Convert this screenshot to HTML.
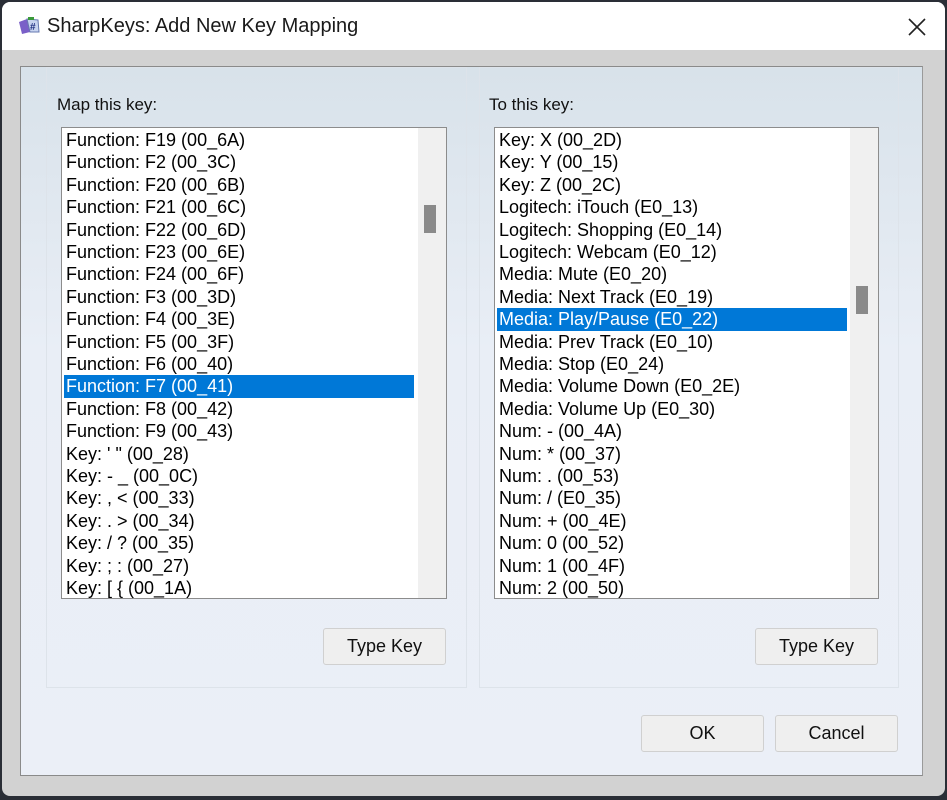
<!DOCTYPE html>
<html><head><style>
*{margin:0;padding:0;box-sizing:border-box}
body{width:947px;height:800px;background:#2a2e36;position:relative;overflow:hidden;font-family:"Liberation Sans",Arial,sans-serif;color:#000}
.win{position:absolute;left:2px;top:2px;width:943px;height:794px;background:#d2d2d2;border-radius:8px;overflow:hidden}
.title{position:absolute;left:0;top:0;width:100%;height:48px;background:#fff}
.title span{position:absolute;left:45px;top:13px;font-size:20px;color:#1a1a1a}
.inner{position:absolute;left:18px;top:64px;width:903px;height:710px;border:1px solid #8a8a8a;border-right-color:#9a9a9a;background:linear-gradient(#d8e2ea,#e9eef6 40%,#ebeff7)}
.grp{position:absolute;border:1px solid #dde3ea;top:0}
.lbl{position:absolute;font-size:17px;color:#111}
.list{position:absolute;background:#fff;border:1px solid #8c8c8c;overflow:hidden}
.row{position:absolute;left:4px;height:22.4px;line-height:22.4px;font-size:18px;white-space:nowrap}
.sel{background:#0078d7;color:#fff;width:350px;left:2px;padding-left:2px}
.sb{position:absolute;right:0;top:0;width:28px;height:100%;background:#f0f0f0}
.th{position:absolute;left:6px;width:12px;height:28px;background:#8a8a8a}
.btn{position:absolute;width:123px;height:37px;background:#efefef;border:1px solid #d0d0d0;border-radius:3px;font-size:18px;text-align:center;line-height:35px;color:#111}
</style></head><body>
<div class="win">
<div class="title">
<svg style="position:absolute;left:15px;top:14px" width="24" height="20" viewBox="0 0 24 20"><path d="M2 6 L10 3 L13 16 L5 18 Z" fill="#7a5fc8"/><path d="M10 3 L21 4 L22 16 L13 16 Z" fill="#c8d4f0" stroke="#6678b0" stroke-width="1"/><text x="13" y="14" font-size="10" font-family="Liberation Sans" fill="#203080" font-weight="bold">#</text><rect x="11" y="1" width="6" height="3" fill="#3a9a3a"/></svg>
<span>SharpKeys: Add New Key Mapping</span>
<svg style="position:absolute;left:906px;top:16px" width="18" height="18" viewBox="0 0 18 18"><path d="M1 1L17 17M17 1L1 17" stroke="#222" stroke-width="1.6"/></svg>
</div>
<div class="inner">
<div class="grp" style="left:25px;width:421px;height:621px"></div>
<div class="grp" style="left:458px;width:420px;height:621px"></div>
<div class="lbl" style="left:36px;top:28px">Map this key:</div>
<div class="lbl" style="left:468px;top:28px">To this key:</div>
<div class="list" style="left:40px;top:60px;width:386px;height:472px">
<div class="sb"><div class="th" style="top:77px"></div></div>
<div class="row" style="top:1px">Function: F19 (00_6A)</div>
<div class="row" style="top:23.4px">Function: F2 (00_3C)</div>
<div class="row" style="top:45.8px">Function: F20 (00_6B)</div>
<div class="row" style="top:68.2px">Function: F21 (00_6C)</div>
<div class="row" style="top:90.6px">Function: F22 (00_6D)</div>
<div class="row" style="top:113px">Function: F23 (00_6E)</div>
<div class="row" style="top:135.4px">Function: F24 (00_6F)</div>
<div class="row" style="top:157.8px">Function: F3 (00_3D)</div>
<div class="row" style="top:180.2px">Function: F4 (00_3E)</div>
<div class="row" style="top:202.6px">Function: F5 (00_3F)</div>
<div class="row" style="top:225px">Function: F6 (00_40)</div>
<div class="row sel" style="top:247.4px">Function: F7 (00_41)</div>
<div class="row" style="top:269.8px">Function: F8 (00_42)</div>
<div class="row" style="top:292.2px">Function: F9 (00_43)</div>
<div class="row" style="top:314.6px">Key: ' " (00_28)</div>
<div class="row" style="top:337px">Key: - _ (00_0C)</div>
<div class="row" style="top:359.4px">Key: , &lt; (00_33)</div>
<div class="row" style="top:381.8px">Key: . &gt; (00_34)</div>
<div class="row" style="top:404.2px">Key: / ? (00_35)</div>
<div class="row" style="top:426.6px">Key: ; : (00_27)</div>
<div class="row" style="top:449px">Key: [ { (00_1A)</div>
</div>
<div class="list" style="left:473px;top:60px;width:385px;height:472px">
<div class="sb"><div class="th" style="top:158px"></div></div>
<div class="row" style="top:1px">Key: X (00_2D)</div>
<div class="row" style="top:23.4px">Key: Y (00_15)</div>
<div class="row" style="top:45.8px">Key: Z (00_2C)</div>
<div class="row" style="top:68.2px">Logitech: iTouch (E0_13)</div>
<div class="row" style="top:90.6px">Logitech: Shopping (E0_14)</div>
<div class="row" style="top:113px">Logitech: Webcam (E0_12)</div>
<div class="row" style="top:135.4px">Media: Mute (E0_20)</div>
<div class="row" style="top:157.8px">Media: Next Track (E0_19)</div>
<div class="row sel" style="top:180.2px">Media: Play/Pause (E0_22)</div>
<div class="row" style="top:202.6px">Media: Prev Track (E0_10)</div>
<div class="row" style="top:225px">Media: Stop (E0_24)</div>
<div class="row" style="top:247.4px">Media: Volume Down (E0_2E)</div>
<div class="row" style="top:269.8px">Media: Volume Up (E0_30)</div>
<div class="row" style="top:292.2px">Num: - (00_4A)</div>
<div class="row" style="top:314.6px">Num: * (00_37)</div>
<div class="row" style="top:337px">Num: . (00_53)</div>
<div class="row" style="top:359.4px">Num: / (E0_35)</div>
<div class="row" style="top:381.8px">Num: + (00_4E)</div>
<div class="row" style="top:404.2px">Num: 0 (00_52)</div>
<div class="row" style="top:426.6px">Num: 1 (00_4F)</div>
<div class="row" style="top:449px">Num: 2 (00_50)</div>
</div>
<div class="btn" style="left:302px;top:561px">Type Key</div>
<div class="btn" style="left:734px;top:561px">Type Key</div>
<div class="btn" style="left:620px;top:648px">OK</div>
<div class="btn" style="left:754px;top:648px">Cancel</div>
</div>
</div>
</body></html>
